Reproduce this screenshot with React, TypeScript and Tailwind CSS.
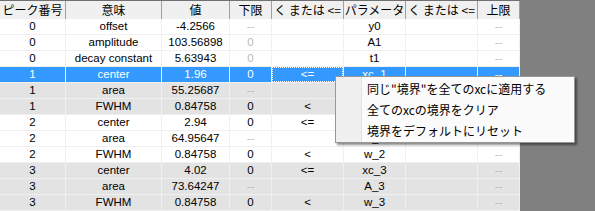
import React from "react";

type Row = {
  p: string;
  m: string;
  v: string;
  lo: string;
  loDis?: boolean;
  op1: string;
  param: string;
  tone: "white" | "gray" | "sel";
};

const rows: Row[] = [
  { p: "0", m: "offset", v: "-4.2566", lo: "--", loDis: true, op1: "", param: "y0", tone: "white" },
  { p: "0", m: "amplitude", v: "103.56898", lo: "0", loDis: true, op1: "", param: "A1", tone: "white" },
  { p: "0", m: "decay constant", v: "5.63943", lo: "0", loDis: true, op1: "", param: "t1", tone: "white" },
  { p: "1", m: "center", v: "1.96", lo: "0", op1: "<=", param: "xc_1", tone: "sel" },
  { p: "1", m: "area", v: "55.25687", lo: "--", loDis: true, op1: "", param: "A_1", tone: "gray" },
  { p: "1", m: "FWHM", v: "0.84758", lo: "0", op1: "<", param: "w_1", tone: "gray" },
  { p: "2", m: "center", v: "2.94", lo: "0", op1: "<=", param: "xc_2", tone: "white" },
  { p: "2", m: "area", v: "64.95647", lo: "--", loDis: true, op1: "", param: "A_2", tone: "white" },
  { p: "2", m: "FWHM", v: "0.84758", lo: "0", op1: "<", param: "w_2", tone: "white" },
  { p: "3", m: "center", v: "4.02", lo: "0", op1: "<=", param: "xc_3", tone: "gray" },
  { p: "3", m: "area", v: "73.64247", lo: "--", loDis: true, op1: "", param: "A_3", tone: "gray" },
  { p: "3", m: "FWHM", v: "0.84758", lo: "0", op1: "<", param: "w_3", tone: "gray" },
];

const widths = ["w-[66px]", "w-[96px]", "w-[68px]", "w-[42px]", "w-[72px]", "w-[62px]", "w-[72px]", "w-[42px]"];
const headers = ["ピーク番号", "意味", "値", "下限", "く または <=", "パラメータ", "く または <=", "上限"];

function Cell({ w, children, extra }: { w: string; children?: React.ReactNode; extra?: string }) {
  return (
    <div
      className={`${w} h-[16px] shrink-0 flex items-center justify-center border-r border-b border-[#f0f0f0] leading-none whitespace-nowrap overflow-hidden ${extra ?? ""}`}
    >
      {children}
    </div>
  );
}

export default function App() {
  return (
    <div className="relative w-[595px] h-[211px] bg-[#808080] overflow-hidden font-[family-name:'Liberation_Sans','Noto_Sans_CJK_JP',sans-serif] text-[11.5px] text-black">
      <div className="w-[520px] border-t border-[#707070]">
        <div className="flex h-[18px] bg-[#f0f0f0]">
          {headers.map((h, i) => (
            <div
              key={i}
              className={`${widths[i]} shrink-0 flex items-center justify-center border-r border-[#a0a0a0] whitespace-nowrap font-[family-name:'Noto_Sans_CJK_JP',sans-serif] text-[12px] leading-none`}
            >
              {h}
            </div>
          ))}
        </div>
        {rows.map((r, i) => {
          const sel = r.tone === "sel";
          const bg = sel ? "bg-[#3399ff] text-white" : r.tone === "gray" ? "bg-[#e3e3e3] text-black" : "bg-white text-black";
          const dis = sel ? "text-white" : "text-[#b8b8b8]";
          return (
            <div key={i} className={`flex ${bg}`}>
              <Cell w={widths[0]}>{r.p}</Cell>
              <Cell w={widths[1]}>{r.m}</Cell>
              <Cell w={widths[2]}>{r.v}</Cell>
              <Cell w={widths[3]} extra={r.loDis ? dis : ""}>{r.lo}</Cell>
              <Cell w={widths[4]} extra="relative">
                {sel && <div className="absolute inset-0 border border-dotted border-white" />}
                {r.op1}
              </Cell>
              <Cell w={widths[5]}>{r.param}</Cell>
              <Cell w={widths[6]}></Cell>
              <Cell w={widths[7]} extra={dis}>--</Cell>
            </div>
          );
        })}
      </div>

      <div className="absolute left-[335px] top-[76px] w-[240px] h-[67px] border border-[#979797] bg-[#fbfbfb] shadow-[2px_2px_2px_rgba(0,0,0,0.45)] flex font-[family-name:'Noto_Sans_CJK_JP',sans-serif] text-[12px] text-black">
        <div className="w-[26px] h-full bg-[#f0f0f0] border-r border-[#e2e3e3]" />
        <div className="flex-1 flex flex-col py-[1px] pl-[5px]">
          <div className="h-[21px] flex items-center">同じ"境界"を全てのxcに適用する</div>
          <div className="h-[21px] flex items-center">全てのxcの境界をクリア</div>
          <div className="h-[21px] flex items-center">境界をデフォルトにリセット</div>
        </div>
      </div>
    </div>
  );
}
